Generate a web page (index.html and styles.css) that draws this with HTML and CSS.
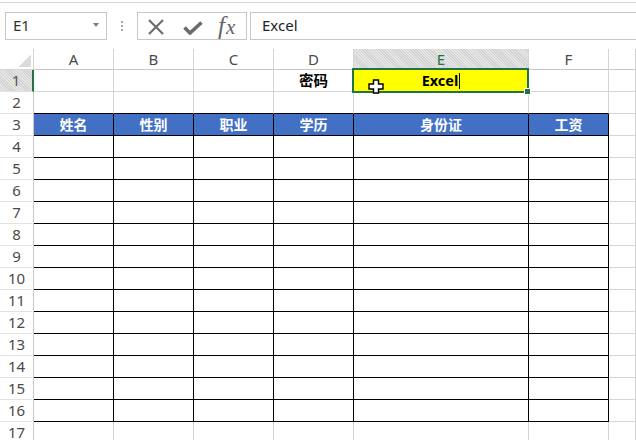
FILE: index.html
```html
<!DOCTYPE html>
<html lang="zh-CN">
<head>
<meta charset="utf-8">
<title>Excel</title>
<link rel="stylesheet" href="styles.css">
</head>
<body>
<div class="app">
  <div class="topline"></div>
  <div class="fbar">
    <div class="namebox"><span class="ref">E1</span><span class="dd"></span></div>
    <div class="grip"><i></i><i></i><i></i></div>
    <div class="btns">
      <svg class="ico-x" width="18" height="16" viewBox="0 0 18 16"><path d="M2 1 L16 15 M16 1 L2 15" stroke="#6e6e6e" stroke-width="2.2" fill="none"/></svg>
      <svg class="ico-ok" width="20" height="14" viewBox="0 0 20 14"><path d="M1.5 6.5 L7 12 L18.5 1.5" stroke="#6b6b6b" stroke-width="3.6" fill="none"/></svg>
      <span class="fx"><i>f</i><i class="x">x</i></span>
    </div>
    <div class="finput">Excel</div>
  </div>

  <div class="sheet">
    <div class="row hdr">
      <div class="corner"></div>
      <div class="ch">A</div><div class="ch">B</div><div class="ch">C</div><div class="ch">D</div><div class="ch on">E</div><div class="ch">F</div><div class="ch"></div>
    </div>
    <div class="row">
      <div class="rh on">1</div>
      <div class="c"></div><div class="c"></div><div class="c"></div><div class="c b">密码</div>
      <div class="c e1 b">Excel<span class="caret"></span>
        <div class="selbox"><span class="handle"></span></div>
        <svg class="cross" width="16" height="15" viewBox="0 0 16 15"><path d="M5.5 1 H10.5 V5 H15 V10 H10.5 V14 H5.5 V10 H1 V5 H5.5 Z" fill="#fff" stroke="#000" stroke-width="1.4"/></svg>
      </div>
      <div class="c"></div><div class="c"></div>
    </div>
    <div class="row">
      <div class="rh">2</div>
      <div class="c tb"></div><div class="c tb"></div><div class="c tb"></div><div class="c tb"></div><div class="c tb"></div><div class="c tb"></div><div class="c"></div>
    </div>
    <div class="row">
      <div class="rh">3</div>
      <div class="c t th">姓名</div><div class="c t th">性别</div><div class="c t th">职业</div><div class="c t th">学历</div><div class="c t th">身份证</div><div class="c t th">工资</div><div class="c"></div>
    </div>
    <div class="row"><div class="rh">4</div><div class="c t"></div><div class="c t"></div><div class="c t"></div><div class="c t"></div><div class="c t"></div><div class="c t"></div><div class="c"></div></div>
    <div class="row"><div class="rh">5</div><div class="c t"></div><div class="c t"></div><div class="c t"></div><div class="c t"></div><div class="c t"></div><div class="c t"></div><div class="c"></div></div>
    <div class="row"><div class="rh">6</div><div class="c t"></div><div class="c t"></div><div class="c t"></div><div class="c t"></div><div class="c t"></div><div class="c t"></div><div class="c"></div></div>
    <div class="row"><div class="rh">7</div><div class="c t"></div><div class="c t"></div><div class="c t"></div><div class="c t"></div><div class="c t"></div><div class="c t"></div><div class="c"></div></div>
    <div class="row"><div class="rh">8</div><div class="c t"></div><div class="c t"></div><div class="c t"></div><div class="c t"></div><div class="c t"></div><div class="c t"></div><div class="c"></div></div>
    <div class="row"><div class="rh">9</div><div class="c t"></div><div class="c t"></div><div class="c t"></div><div class="c t"></div><div class="c t"></div><div class="c t"></div><div class="c"></div></div>
    <div class="row"><div class="rh">10</div><div class="c t"></div><div class="c t"></div><div class="c t"></div><div class="c t"></div><div class="c t"></div><div class="c t"></div><div class="c"></div></div>
    <div class="row"><div class="rh">11</div><div class="c t"></div><div class="c t"></div><div class="c t"></div><div class="c t"></div><div class="c t"></div><div class="c t"></div><div class="c"></div></div>
    <div class="row"><div class="rh">12</div><div class="c t"></div><div class="c t"></div><div class="c t"></div><div class="c t"></div><div class="c t"></div><div class="c t"></div><div class="c"></div></div>
    <div class="row"><div class="rh">13</div><div class="c t"></div><div class="c t"></div><div class="c t"></div><div class="c t"></div><div class="c t"></div><div class="c t"></div><div class="c"></div></div>
    <div class="row"><div class="rh">14</div><div class="c t"></div><div class="c t"></div><div class="c t"></div><div class="c t"></div><div class="c t"></div><div class="c t"></div><div class="c"></div></div>
    <div class="row"><div class="rh">15</div><div class="c t"></div><div class="c t"></div><div class="c t"></div><div class="c t"></div><div class="c t"></div><div class="c t"></div><div class="c"></div></div>
    <div class="row"><div class="rh">16</div><div class="c t"></div><div class="c t"></div><div class="c t"></div><div class="c t"></div><div class="c t"></div><div class="c t"></div><div class="c"></div></div>
    <div class="row"><div class="rh">17</div><div class="c"></div><div class="c"></div><div class="c"></div><div class="c"></div><div class="c"></div><div class="c"></div><div class="c"></div></div>
  </div>
</div>
</body>
</html>
```
FILE: styles.css
```css
html, body {
  margin: 0;
  padding: 0;
  background: #fff;
}
body {
  width: 636px;
  height: 440px;
  overflow: hidden;
  font-family: "Noto Sans", "Noto Sans CJK SC", sans-serif;
}
.app {
  width: 636px;
}
.topline {
  height: 2px;
  border-bottom: 1px solid #d6d6d6;
}
.fbar {
  display: flex;
  align-items: stretch;
  height: 28px;
  margin-top: 9px;
  padding-left: 5px;
}
.namebox {
  box-sizing: border-box;
  width: 102px;
  border: 1px solid #c6c6c6;
  display: flex;
  align-items: center;
  justify-content: space-between;
  padding: 0 7px 0 7px;
  font-size: 15px;
  color: #333;
}
.namebox .ref {
  line-height: 1;
  margin-top: -1px;
}
.namebox .dd {
  width: 0;
  height: 0;
  border-left: 3px solid transparent;
  border-right: 3px solid transparent;
  border-top: 4px solid #7a7a7a;
  margin-top: -2px;
}
.grip {
  width: 30px;
  display: flex;
  flex-direction: column;
  align-items: center;
  justify-content: center;
  gap: 2px;
}
.grip i {
  display: block;
  width: 2px;
  height: 2px;
  background: #a8a8a8;
}
.btns {
  box-sizing: border-box;
  width: 110px;
  border: 1px solid #c6c6c6;
  display: flex;
  align-items: center;
  padding-left: 9px;
}
.ico-x {
  margin-top: 1px;
}
.ico-ok {
  margin-left: 18px;
  margin-top: 3px;
}
.fx {
  margin-left: 15px;
  font-family: "Liberation Serif", "DejaVu Serif", serif;
  font-size: 25px;
  color: #646464;
  line-height: 1;
  margin-top: -2px;
}
.fx i {
  font-style: italic;
}
.fx .x {
  font-size: 21px;
  margin-left: 1px;
}
.finput {
  box-sizing: border-box;
  flex: 1;
  margin-left: 3px;
  margin-right: -2px;
  border: 1px solid #c6c6c6;
  padding-left: 11px;
  font-size: 15px;
  color: #222;
  line-height: 25px;
}

.sheet {
  margin-top: 9px;
}
.row {
  display: grid;
  grid-template-columns: 34px 80px 80px 80px 80px 175px 80px 1fr;
  height: 22px;
}
.row.hdr {
  height: 21px;
}
.row > div {
  box-sizing: border-box;
  border-right: 1px solid #d5d5d5;
  border-bottom: 1px solid #d5d5d5;
}
.corner {
  background: linear-gradient(to bottom right, transparent 50%, #dadada 50%) no-repeat right 2px bottom 2px / 13px 13px;
}
.ch {
  text-align: center;
  font-size: 15px;
  line-height: 20px;
  color: #4a4a4a;
  border-bottom-color: #c8c8c8 !important;
}
.ch.on {
  color: #217346;
  background: repeating-linear-gradient(45deg, #e6e6e6 0 1px, #d2d2d2 1px 2px);
}
.rh {
  text-align: center;
  font-size: 15px;
  line-height: 21px;
  color: #4a4a4a;
  border-right-color: #c8c8c8 !important;
  border-bottom-color: #e2e2e2 !important;
}
.rh.on {
  color: #555;
  border-right: 2px solid #217346 !important;
  background: repeating-linear-gradient(45deg, #e6e6e6 0 1px, #d2d2d2 1px 2px);
}
.c {
  font-family: "Noto Sans", "Noto Sans CJK SC", sans-serif;
  font-size: 14.5px;
  line-height: 21px;
  text-align: center;
  color: #000;
}
.c.b {
  font-weight: 700;
}
.c.tb {
  border-bottom-color: #000;
}
.c.t {
  border-right-color: #000;
  border-bottom-color: #000;
}
.c.th {
  background: #4170c4;
  color: #fff;
  font-family: "Noto Sans CJK SC", sans-serif;
  font-size: 14px;
  font-weight: 700;
}
.e1 {
  position: relative;
  background: #ffff00;
}
.caret {
  display: inline-block;
  width: 1px;
  height: 16px;
  background: #000;
  vertical-align: -3px;
  margin-left: 1px;
}
.selbox {
  position: absolute;
  left: -2px;
  top: -2px;
  right: -1px;
  bottom: -2px;
  border: 2px solid #217346;
}
.handle {
  position: absolute;
  right: -4px;
  bottom: -4px;
  width: 5px;
  height: 5px;
  background: #217346;
  border: 1px solid #fff;
}
.cross {
  position: absolute;
  left: 14px;
  top: 9px;
}
```
